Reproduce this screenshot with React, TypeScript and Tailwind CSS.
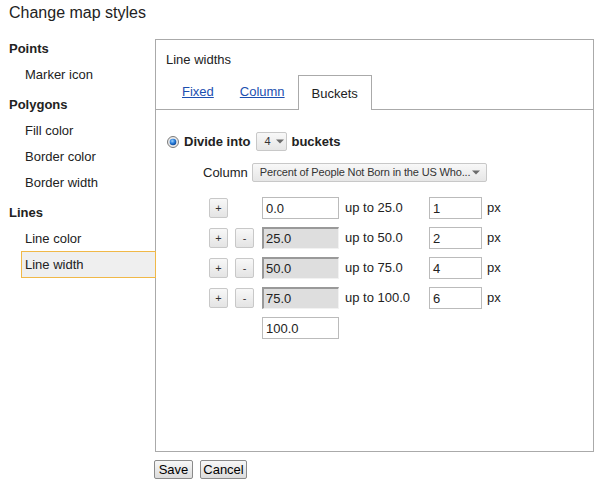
import React from "react";

const sidebar = [
  { title: "Points", items: ["Marker icon"] },
  { title: "Polygons", items: ["Fill color", "Border color", "Border width"] },
  { title: "Lines", items: ["Line color", "Line width"] },
];

const buckets = [
  { from: "0.0", to: "up to 25.0", px: "1", first: true },
  { from: "25.0", to: "up to 50.0", px: "2", first: false },
  { from: "50.0", to: "up to 75.0", px: "4", first: false },
  { from: "75.0", to: "up to 100.0", px: "6", first: false },
];

function Arrow() {
  return (
    <svg width="8" height="5" viewBox="0 0 8 5" className="shrink-0">
      <path d="M0 0.5 L8 0.5 L4 4.5 Z" fill="#6b6b6b" />
    </svg>
  );
}

function SmallButton({ label }: { label: string }) {
  return (
    <div className="w-[19px] h-[20px] flex items-center justify-center rounded-[2px] border border-[#c8c8c8] bg-gradient-to-b from-[#f8f8f8] to-[#e4e4e4] text-[11px] leading-none text-[#333]">
      {label}
    </div>
  );
}

export default function App() {
  return (
    <div className="w-[597px] h-[487px] bg-white text-[#222] text-[13px] font-['Liberation_Sans',Arial,sans-serif]">
      <div className="h-[39px] pl-[9px] pt-[3px] text-[16px] leading-[20px]">
        Change map styles
      </div>

      <div className="flex">
        {/* sidebar */}
        <div className="w-[155px] shrink-0">
          {sidebar.map((section, i) => (
            <div key={section.title}>
              <div
                className={`pl-[9px] font-bold leading-[16px] pb-[4px] ${
                  i === 0 ? "pt-[2px]" : "pt-[10px]"
                }`}
              >
                {section.title}
              </div>
              {section.items.map((item) =>
                item === "Line width" ? (
                  <div
                    key={item}
                    className="relative z-10 ml-[21px] w-[135px] h-[27px] leading-[26px] pl-[3px] border border-[#f0b848] bg-[#efefef]"
                  >
                    {item}
                  </div>
                ) : (
                  <div key={item} className="pl-[25px] h-[26px] leading-[27px]">
                    {item}
                  </div>
                )
              )}
            </div>
          ))}
        </div>

        {/* panel */}
        <div className="w-[439px] h-[413px] border border-[#aaa] flex flex-col">
          <div className="pl-[10px] pt-[12px] leading-[16px]">Line widths</div>

          <div className="mt-[7px] h-[35px] flex items-end border-b border-[#aaa] pl-[13px]">
            <div className="px-[13px] leading-[35px] text-[#1c4fb0] underline">Fixed</div>
            <div className="px-[13px] leading-[35px] text-[#1c4fb0] underline">Column</div>
            <div className="h-[35px] mb-[-1px] px-[13px] leading-[35px] bg-white border border-b-0 border-[#aaa]">
              Buckets
            </div>
          </div>

          <div className="mt-[22px] pl-[11px] h-[19px] flex items-center">
            <svg width="12" height="12" viewBox="0 0 12 12" className="shrink-0">
              <defs>
                <radialGradient id="dot" cx="0.4" cy="0.35" r="0.7">
                  <stop offset="0" stopColor="#9fd4ff" />
                  <stop offset="0.5" stopColor="#2a7fdc" />
                  <stop offset="1" stopColor="#0b3f8c" />
                </radialGradient>
              </defs>
              <circle cx="6" cy="6" r="5.5" fill="#e9e9e9" stroke="#7a7a7a" strokeWidth="1" />
              <circle cx="6" cy="6" r="3.3" fill="url(#dot)" />
            </svg>
            <span className="ml-[5px] font-bold">Divide into</span>
            <div className="ml-[6px] w-[31px] h-[19px] flex items-center gap-[5px] pl-[7px] rounded-[2px] border border-[#c8c8c8] bg-gradient-to-b from-[#f8f8f8] to-[#e6e6e6] text-[11px] text-[#333]">
              4
              <Arrow />
            </div>
            <span className="ml-[4px] font-bold">buckets</span>
          </div>

          <div className="mt-[12px] pl-[47px] h-[19px] flex items-center">
            <span>Column</span>
            <div className="ml-[4px] w-[235px] h-[19px] flex items-center justify-between pl-[7px] pr-[6px] rounded-[2px] border border-[#c8c8c8] bg-gradient-to-b from-[#f8f8f8] to-[#e6e6e6] text-[11px] tracking-[-0.15px] text-[#333] whitespace-nowrap overflow-hidden">
              <span>Percent of People Not Born in the US Who...</span>
              <Arrow />
            </div>
          </div>

          <div className="mt-[15px] pl-[53px] flex flex-col gap-[8px]">
            {buckets.map((b) => (
              <div key={b.from} className="h-[22px] flex items-center">
                <SmallButton label="+" />
                <div className="ml-[7px]">
                  {b.first ? <div className="w-[19px]" /> : <SmallButton label="-" />}
                </div>
                {b.first ? (
                  <div className="ml-[8px] w-[77px] h-[22px] px-[3px] leading-[21px] border border-[#bbb] bg-white">
                    {b.from}
                  </div>
                ) : (
                  <div className="ml-[8px] w-[77px] h-[22px] pl-[2px] leading-[20px] border-t-2 border-l-2 border-r border-b border-t-[#999] border-l-[#999] border-r-[#f2f2f2] border-b-[#f2f2f2] bg-[#dedede]">
                    {b.from}
                  </div>
                )}
                <div className="ml-[6px] w-[84px]">{b.to}</div>
                <div className="w-[53px] h-[22px] px-[3px] leading-[21px] border border-[#bbb] bg-white">
                  {b.px}
                </div>
                <span className="ml-[5px]">px</span>
              </div>
            ))}
            <div className="h-[22px] flex items-center">
              <div className="ml-[53px] w-[77px] h-[22px] px-[3px] leading-[21px] border border-[#bbb] bg-white">
                100.0
              </div>
            </div>
          </div>
        </div>
      </div>

      <div className="mt-[8px] pl-[154px] flex gap-[7px]">
        <button className="w-[39px] h-[19px] leading-[17px] rounded-[2px] border border-[#8a8a8a] bg-gradient-to-b from-[#f7f7f7] to-[#dcdcdc] text-[13px] text-black">
          Save
        </button>
        <button className="w-[47px] h-[19px] leading-[17px] rounded-[2px] border border-[#8a8a8a] bg-gradient-to-b from-[#f7f7f7] to-[#dcdcdc] text-[13px] text-black">
          Cancel
        </button>
      </div>
    </div>
  );
}
